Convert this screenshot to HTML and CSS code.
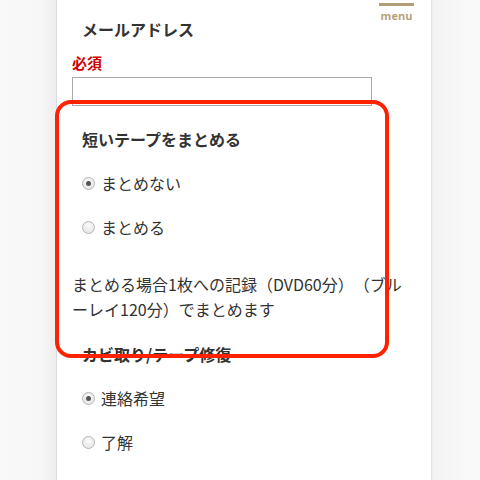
FILE: index.html
```html
<!DOCTYPE html>
<html lang="ja">
<head>
<meta charset="utf-8">
<link rel="stylesheet" href="styles.css">
</head>
<body>
<div class="page">
  <div class="panel">
    <div class="menu"><span class="menu-bar"></span><span class="menu-label">menu</span></div>
    <h3 class="label">メールアドレス</h3>
    <p class="req">必須</p>
    <div class="input"></div>
    <h3 class="label label-second">短いテープをまとめる</h3>
    <ul class="radios">
      <li class="radio-row"><span class="radio checked"></span>まとめない</li>
      <li class="radio-row"><span class="radio"></span>まとめる</li>
    </ul>
    <p class="note">まとめる場合1枚への記録（DVD60分）（ブルーレイ120分）でまとめます</p>
    <h3 class="label label-third">カビ取り/テープ修復</h3>
    <ul class="radios">
      <li class="radio-row"><span class="radio checked"></span>連絡希望</li>
      <li class="radio-row"><span class="radio"></span>了解</li>
    </ul>
    <div class="highlight"></div>
  </div>
</div>
</body>
</html>
```
FILE: styles.css
```css
html, body {
  margin: 0;
  padding: 0;
}
body {
  width: 480px;
  height: 480px;
  overflow: hidden;
  font-family: "Noto Sans CJK JP", "Noto Sans", sans-serif;
  color: #333;
  text-spacing-trim: space-all;
  background: linear-gradient(to right, #f9f9f9 0, #f7f7f7 40px, #eeeeee 56px, #eeeeee 432px, #f3f3f3 434px, #f9f9f9 470px);
}
.page {
  display: flex;
  height: 480px;
}
.panel {
  position: relative;
  margin-left: 56px;
  width: 376px;
  box-sizing: border-box;
  background: #fff;
  border-left: 1px solid #dcdcdc;
  border-right: 1px solid #e2e2e2;
  padding: 17px 15px 0 15px;
  height: 480px;
}
.menu {
  position: absolute;
  top: 3px;
  right: 17px;
  width: 35px;
  display: flex;
  flex-direction: column;
  align-items: center;
}
.menu-bar {
  display: block;
  width: 35px;
  height: 3px;
  background: #b39f77;
}
.menu-label {
  margin-top: 3px;
  font-family: "Open Sans", "Liberation Sans", sans-serif;
  font-weight: 700;
  font-size: 11px;
  line-height: 14px;
  color: #b5a27c;
}
.label {
  margin: 0;
  padding-left: 10px;
  font-size: 16px;
  font-weight: 700;
  line-height: 24px;
  color: #333;
}
.req {
  margin: 11px 0 0 0;
  font-size: 15px;
  font-weight: 700;
  line-height: 22px;
  color: #cc0000;
}
.input {
  margin-top: 3px;
  width: 300px;
  height: 29px;
  box-sizing: border-box;
  border: 1px solid #aaa;
}
.label-second {
  margin-top: 21px;
}
.radios {
  list-style: none;
  margin: 10px 0 0 0;
  padding: 0;
}
.radio-row {
  display: flex;
  align-items: center;
  gap: 6px;
  padding-left: 10px;
  height: 44px;
  font-size: 16px;
  color: #333;
}
.radio {
  width: 11px;
  height: 11px;
  border-radius: 50%;
  border: 1px solid #b5b5b5;
  background: radial-gradient(circle at 50% 35%, #fbfbfb 0, #e0e0e0 100%);
  position: relative;
  flex: none;
}
.radio.checked::after {
  content: "";
  position: absolute;
  left: 3px;
  top: 3px;
  width: 5px;
  height: 5px;
  border-radius: 50%;
  background: #555;
}
.note {
  margin: 23px 0 0 0;
  font-size: 16px;
  line-height: 25px;
  color: #333;
}
.label-third {
  margin-top: 20px;
}
.highlight {
  position: absolute;
  left: -2px;
  top: 100px;
  width: 334px;
  height: 258px;
  box-sizing: border-box;
  border: 4px solid #ff2200;
  border-radius: 16px;
}
```
